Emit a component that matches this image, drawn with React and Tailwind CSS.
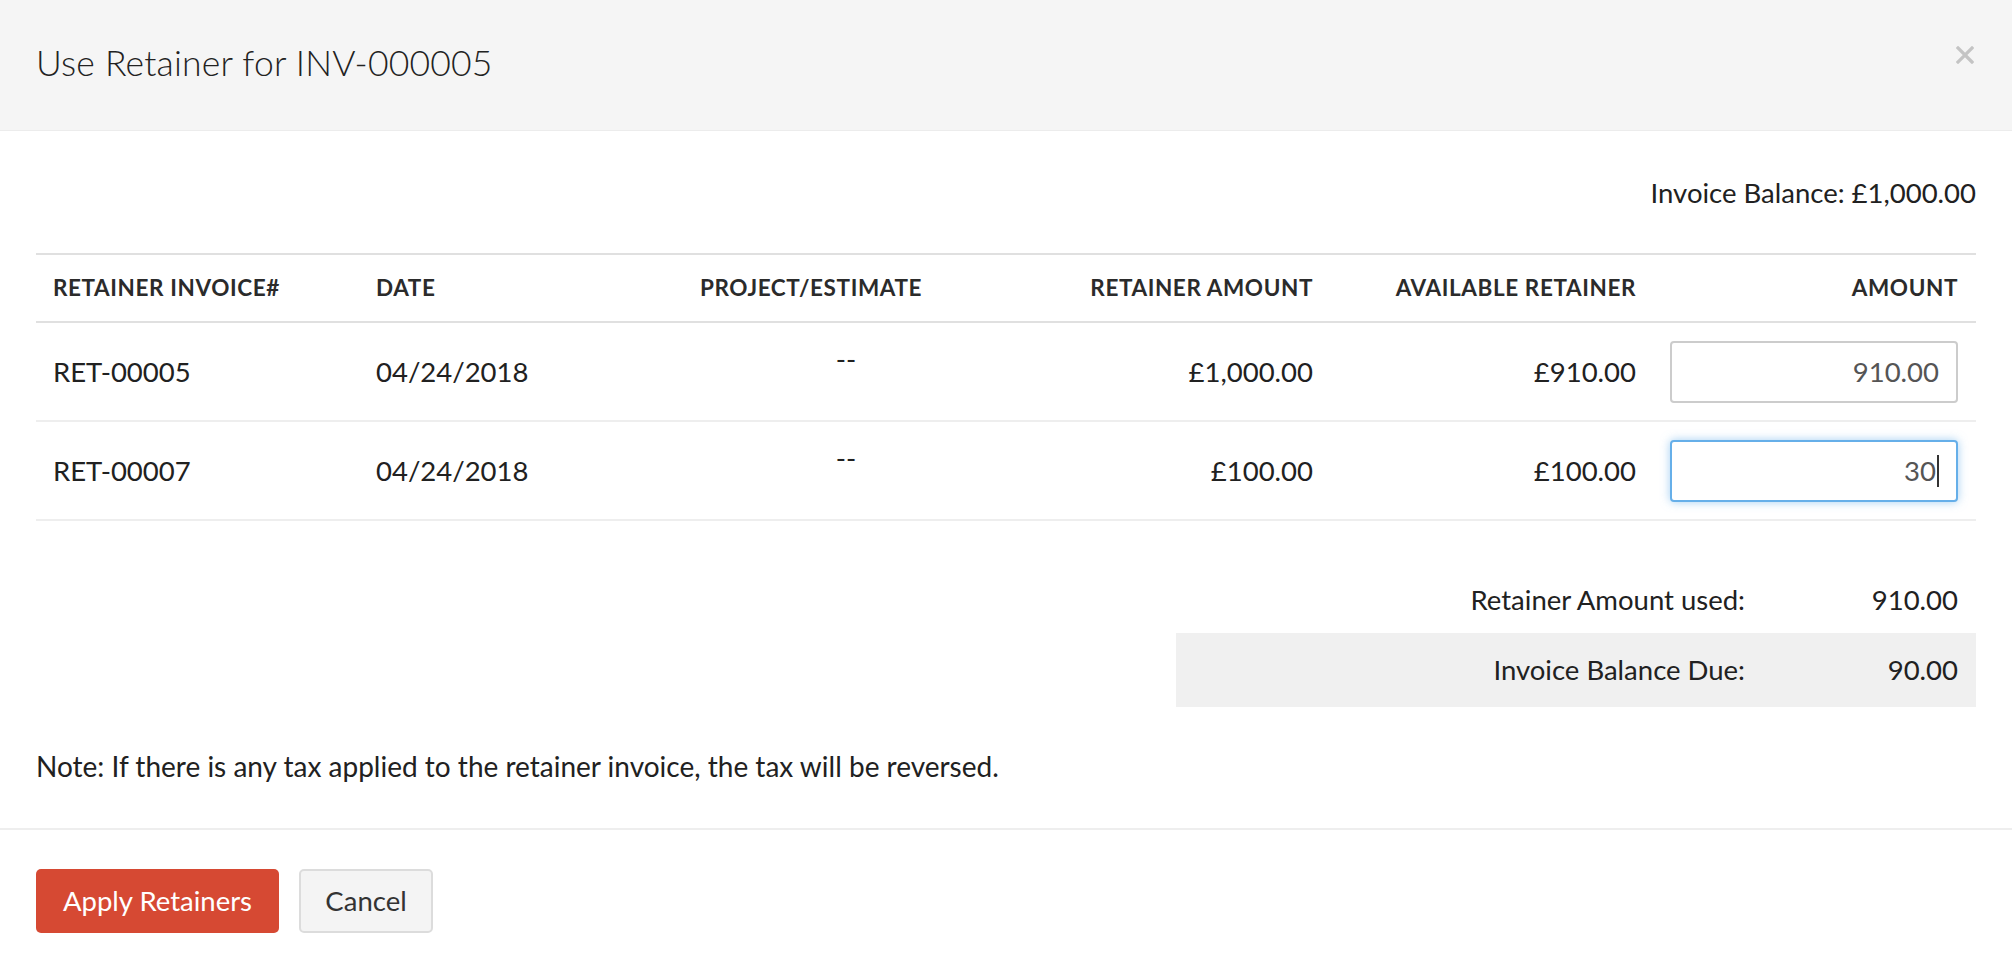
import React from "react"

const rows = [
  { no: "RET-00005", date: "04/24/2018", amount: "£1,000.00", available: "£910.00", value: "910.00", focused: false },
  { no: "RET-00007", date: "04/24/2018", amount: "£100.00", available: "£100.00", value: "30", focused: true },
]

const cols = "grid grid-cols-[323px_261px_382px_328px_323px_322px]"

const App = () => {
  return (
    <div className="w-full min-h-[970px] bg-white font-[Lato,sans-serif] text-[#212121]">
      <div className="h-[131px] bg-[#f5f5f5] border-b border-[#ececec] flex items-center justify-between pl-9 pr-[38px]">
        <h1 className="text-[35.5px] font-light tracking-[0.2px] text-[#222] pb-1">Use Retainer for INV-000005</h1>
        <svg width="18" height="18" viewBox="0 0 18 18" className="mb-[20px]">
          <path d="M2 2 L16 16 M16 2 L2 16" stroke="#c4c4c4" strokeWidth="3.2" strokeLinecap="square" />
        </svg>
      </div>

      <div className="px-9">
        <div className="flex justify-end pt-[47px] pb-[45px] text-[27.5px] leading-[30px]">
          Invoice Balance: £1,000.00
        </div>

        <div className="border-t-2 border-[#e0e0e0]">
          <div className={`${cols} h-[68px] items-center border-b-2 border-[#e0e0e0] text-[22.5px] tracking-[0.6px] font-bold text-[#2b2b2b] uppercase`}>
            <div className="px-[17px]">Retainer Invoice#</div>
            <div className="px-[17px]">Date</div>
            <div className="px-[17px] text-center">Project/Estimate</div>
            <div className="px-[17px] text-right">Retainer Amount</div>
            <div className="px-[17px] text-right">Available Retainer</div>
            <div className="px-[17px] text-right">Amount</div>
          </div>

          {rows.map((row) => (
            <div key={row.no} className={`${cols} h-[99px] items-center border-b-2 border-[#eeeeee] text-[27.5px]`}>
              <div className="px-[17px]">{row.no}</div>
              <div className="px-[17px]">{row.date}</div>
              <div className="self-start pt-[22px] pl-[70px] text-center leading-none">--</div>
              <div className="px-[17px] text-right">{row.amount}</div>
              <div className="px-[17px] text-right">{row.available}</div>
              <div className="px-[17px]">
                <div
                  className={`h-[62px] rounded-[4px] border-2 bg-white flex items-center justify-end pr-[17px] text-[#555] ${
                    row.focused
                      ? "border-[#66afe9] shadow-[0_0_10px_rgba(102,175,233,0.6)]"
                      : "border-[#cccccc]"
                  }`}
                >
                  {row.value}
                  {row.focused && <span className="ml-[1px] w-[2px] h-[32px] bg-[#333]" />}
                </div>
              </div>
            </div>
          ))}
        </div>

        <div className="flex justify-end pt-[58px]">
          <div className="w-[800px] text-[27.5px]">
            <div className="flex h-[54px] items-start">
              <div className="w-[569px] text-right">Retainer Amount used:</div>
              <div className="flex-1 text-right pr-[18px]">910.00</div>
            </div>
            <div className="flex h-[74px] items-center bg-[#f0f0f0]">
              <div className="w-[569px] text-right">Invoice Balance Due:</div>
              <div className="flex-1 text-right pr-[18px]">90.00</div>
            </div>
          </div>
        </div>

        <div className="pt-[44px] pb-[47px] text-[28px] leading-[30px]">
          Note: If there is any tax applied to the retainer invoice, the tax will be reversed.
        </div>
      </div>

      <div className="border-t-2 border-[#eeeeee] px-9 pt-[39px] flex gap-[20px]">
        <button className="h-[64px] w-[243px] rounded-[5px] bg-[#d64933] text-white text-[27.5px]">
          Apply Retainers
        </button>
        <button className="h-[64px] w-[134px] rounded-[5px] bg-[#f4f4f4] border-2 border-[#dcdcdc] text-[#333] text-[27.5px]">
          Cancel
        </button>
      </div>
    </div>
  )
}

export default App
